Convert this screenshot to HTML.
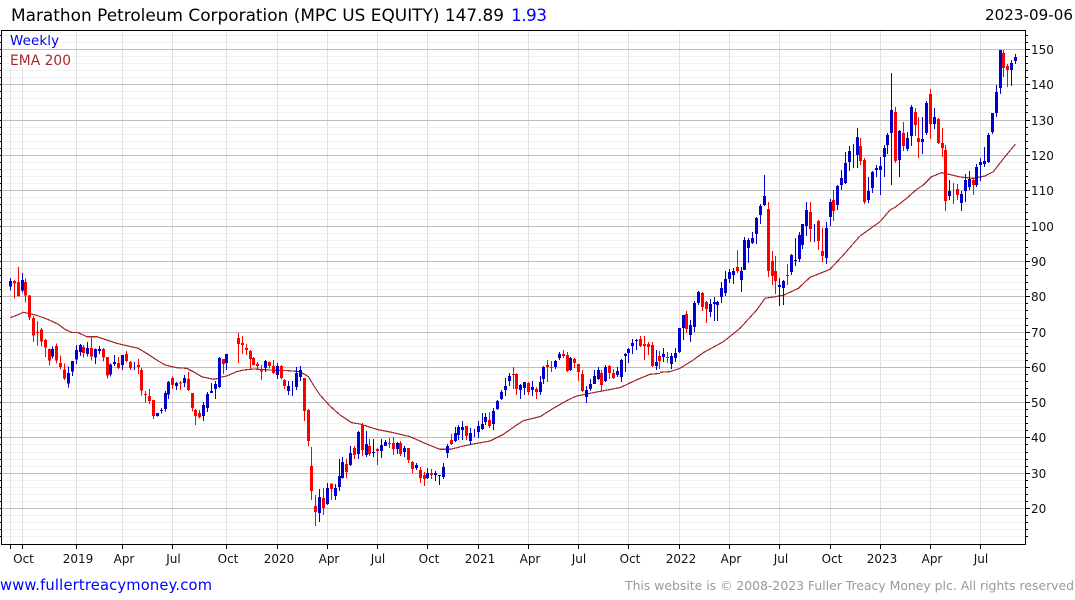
<!DOCTYPE html>
<html><head><meta charset="utf-8"><title>MPC</title>
<style>
html,body{margin:0;padding:0;background:#fff;width:1075px;height:600px;overflow:hidden}
svg{display:block}
text{font-family:"DejaVu Sans","Liberation Sans",sans-serif}
.l{font-size:12px;fill:#111}
.x{font-size:12px;fill:#111;text-anchor:middle}
.bw,.bb,.rw,.rb{fill:none;shape-rendering:crispEdges}
.bw{stroke:#0000cc;stroke-width:3.6}
.bb{stroke:#0000cc;stroke-width:9.6}
.rw{stroke:#ff0000;stroke-width:3.6}
.rb{stroke:#ff0000;stroke-width:9.6}
.e{fill:none;stroke:#a02a2a;stroke-width:3.6;stroke-linejoin:round;shape-rendering:crispEdges}
</style></head><body>
<svg width="1075" height="600" viewBox="0 0 1075 600" xmlns="http://www.w3.org/2000/svg">
<rect width="1075" height="600" fill="#fff"/>
<!-- minor horizontals -->
<path stroke="#f0f0f0" fill="none" shape-rendering="crispEdges" d="M2 35.5H1025M2 42.5H1025M2 56.5H1025M2 63.5H1025M2 70.5H1025M2 77.5H1025M2 91.5H1025M2 98.5H1025M2 105.5H1025M2 112.5H1025M2 127.5H1025M2 134.5H1025M2 141.5H1025M2 148.5H1025M2 162.5H1025M2 169.5H1025M2 176.5H1025M2 183.5H1025M2 197.5H1025M2 204.5H1025M2 212.5H1025M2 219.5H1025M2 233.5H1025M2 240.5H1025M2 247.5H1025M2 254.5H1025M2 268.5H1025M2 275.5H1025M2 282.5H1025M2 289.5H1025M2 303.5H1025M2 310.5H1025M2 318.5H1025M2 325.5H1025M2 339.5H1025M2 346.5H1025M2 353.5H1025M2 360.5H1025M2 374.5H1025M2 381.5H1025M2 388.5H1025M2 395.5H1025M2 409.5H1025M2 416.5H1025M2 423.5H1025M2 430.5H1025M2 444.5H1025M2 452.5H1025M2 459.5H1025M2 466.5H1025M2 480.5H1025M2 487.5H1025M2 494.5H1025M2 501.5H1025M2 515.5H1025M2 522.5H1025M2 529.5H1025M2 536.5H1025"/>
<!-- verticals -->
<path stroke="#e0e0e0" fill="none" shape-rendering="crispEdges" d="M10.5 31V544M22.5 31V544M76.5 31V544M122.5 31V544M172.5 31V544M226.5 31V544M277.5 31V544M327.5 31V544M377.5 31V544M427.5 31V544M478.5 31V544M528.5 31V544M578.5 31V544M628.5 31V544M679.5 31V544M729.5 31V544M779.5 31V544M830.5 31V544M880.5 31V544M930.5 31V544M980.5 31V544"/>
<!-- major horizontals -->
<path stroke="#bdbdbd" fill="none" shape-rendering="crispEdges" d="M2 49.5H1025M2 84.5H1025M2 120.5H1025M2 155.5H1025M2 190.5H1025M2 226.5H1025M2 261.5H1025M2 296.5H1025M2 332.5H1025M2 367.5H1025M2 402.5H1025M2 437.5H1025M2 473.5H1025M2 508.5H1025"/>
<!-- legend backing -->
<rect x="9" y="31" width="52" height="18" fill="#fff"/>
<rect x="9" y="50" width="63" height="18" fill="#fff"/>
<text x="10" y="45" font-size="13.4" fill="#0000e0" textLength="49">Weekly</text>
<text x="10" y="65" font-size="13.8" fill="#a52a2a" textLength="61">EMA 200</text>

<!-- EMA -->
<g transform="translate(0,250) scale(.33333)"><polyline class="e" points="31,203 50,196 70,187 85,190 110,196 130,203 150,211 175,223 195,238 215,247 235,248 260,260 290,260 320,270 350,280 380,287 415,295 440,310 470,330 495,345 530,353 560,355 580,365 605,380 640,388 660,384"/></g>
<g transform="translate(220,320) scale(.33333)"><polyline class="e" points="0,172 20,168 50,155 70,150 100,147 150,150 205,152 240,155 265,170 280,195 300,225 330,258 360,285 395,308 420,312 470,328 520,338 570,350 620,372 660,388 690,388 720,381"/></g>
<g transform="translate(440,320) scale(.33333)"><polyline class="e" points="60,380 100,372 150,363 190,343 230,315 250,302 300,290 340,265 380,242 410,228 470,216 540,203 600,175 630,163 660,160"/></g>
<g transform="translate(660,160) scale(.33333)"><polyline class="e" points="0,637 30,635 60,625 100,600 130,578 190,545 240,505 290,450 315,415 370,406 415,385 450,352 510,328 550,285 600,228"/></g>
<g transform="translate(840,30) scale(.33333)"><polyline class="e" points="60,618 88,598 120,575 150,540 165,532 200,505 230,478 250,465 275,440 305,428 340,436 360,441 400,445 435,438 460,425 495,380 526,343"/></g>

<!-- Candles section 1 -->
<g transform="translate(0,250) scale(.33333)">
<path class="bw" d="M31.5 84V122M67.5 69V127M157.5 290V326M205.5 350V413M217.5 333V378M229.5 285V342M241.5 282V318M262.5 276V320M286.5 295V342M298.5 288V312M331.5 340V379M343.5 315V348M367.5 315V360M403.5 336V360M472.5 489V500M484.5 474V490M496.5 423V484M505.5 393V447M529.5 396V420M553.5 375V411M610.5 456V513M622.5 426V486M634.5 399V429M646.5 393V447M658.5 321V414"/>
<path class="bb" d="M31.5 93V110M67.5 90V122M157.5 297V320M205.5 369V401M217.5 333V365M229.5 300V329M241.5 285V306M262.5 294V312M286.5 297V323M298.5 297V303M331.5 344V373M343.5 336V342M367.5 315V345M472.5 489V498M484.5 480V483M496.5 429V477M505.5 396V434M529.5 399V408M553.5 384V399M610.5 465V498M622.5 432V474M634.5 423V429M646.5 402V417M658.5 324V411"/>
<path class="rw" d="M43.5 90V146M55.5 51V140M76.5 85V158M88.5 135V210M100.5 198V276M112.5 213V287M124.5 234V290M136.5 267V321M148.5 295V347M169.5 280V340M181.5 316V358M193.5 340V390M250.5 285V323M274.5 260V332M310.5 294V335M322.5 321V386M355.5 321V357M379.5 303V338M391.5 333V360M415.5 327V372M424.5 354V437M436.5 423V459M448.5 417V462M460.5 450V507M517.5 380V417M541.5 393V420M565.5 366V423M577.5 429V485M586.5 477V525M598.5 480V505"/>
<path class="rb" d="M43.5 93V100M55.5 96V138M76.5 96V137M88.5 137V203M100.5 204V257M112.5 246V249M124.5 239V275M136.5 270V293M148.5 297V332M169.5 288V332M181.5 339V351M193.5 358V386M250.5 291V309M274.5 294V320M310.5 297V323M322.5 321V377M355.5 339V354M379.5 312V333M391.5 336V354M415.5 345V351M424.5 360V422M436.5 432V435M448.5 438V453M460.5 450V498M517.5 384V405M541.5 398V401M565.5 387V420M577.5 429V474M586.5 480V498M598.5 489V501"/>
</g>
<!-- Candles section 2 -->
<g transform="translate(220,320) scale(.33333)">
<path class="rw" d="M10.5 117V162M55.5 39V129M67.5 48V102M79.5 72V105M91.5 90V148M100.5 111V136M112.5 126V145M124.5 135V180M148.5 124V145M160.5 120V162M184.5 135V178M193.5 177V207M253.5 174V303M265.5 267V378M274.5 381V540M286.5 525V618M310.5 504V585M334.5 491V540M379.5 417V474M403.5 378V417M427.5 309V408M448.5 357V408M472.5 384V435M508.5 354V384M520.5 351V405M541.5 363V408M565.5 384V429M577.5 423V459M601.5 441V489M613.5 456V498M634.5 447V477M694.5 342V375"/>
<path class="rb" d="M10.5 117V132M55.5 54V72M67.5 69V75M79.5 84V90M91.5 93V117M100.5 114V135M112.5 132V138M124.5 147V155M148.5 126V138M160.5 138V159M184.5 138V174M193.5 180V198M253.5 174V273M265.5 270V363M274.5 438V513M286.5 558V576M310.5 534V564M334.5 491V507M379.5 432V456M403.5 384V405M427.5 315V390M448.5 378V402M472.5 387V393M508.5 369V372M520.5 369V387M541.5 369V402M565.5 384V420M577.5 426V447M601.5 450V474M613.5 465V477M634.5 459V465M694.5 360V372"/>
<path class="bw" d="M19.5 102V150M136.5 120V156M172.5 129V177M205.5 183V225M217.5 183V228M229.5 141V210M241.5 138V183M298.5 507V606M322.5 489V555M346.5 492V540M358.5 417V513M367.5 411V476M391.5 378V438M415.5 333V417M439.5 333V411M460.5 357V411M484.5 357V414M496.5 360V378M532.5 366V402M553.5 378V411M589.5 429V450M622.5 444V477M646.5 453V483M658.5 465V495M670.5 429V477M682.5 372V414M706.5 321V366M715.5 315V360"/>
<path class="bb" d="M19.5 102V129M136.5 123V144M172.5 138V165M205.5 198V213M229.5 159V201M241.5 150V171M298.5 531V579M322.5 504V552M346.5 504V528M358.5 468V501M367.5 426V474M391.5 399V435M415.5 336V402M439.5 372V405M460.5 396V399M484.5 375V393M496.5 366V378M532.5 369V387M553.5 384V396M589.5 435V444M622.5 459V474M646.5 459V465M658.5 465V468M670.5 441V471M682.5 378V399M706.5 339V363M715.5 321V345"/>
</g>
<!-- Candles section 3 -->
<g transform="translate(440,320) scale(.33333)">
<path class="bw" d="M67.5 303V360M91.5 324V375M103.5 327V351M115.5 303V354M127.5 279V330M136.5 279V315M160.5 264V330M172.5 240V270M184.5 210V240M196.5 174V228M208.5 159V198M241.5 192V237M253.5 186V225M277.5 183V228M301.5 168V225M310.5 138V192M346.5 120V147M358.5 96V120M391.5 111V153M439.5 198V249M451.5 177V213M463.5 150V192M475.5 141V180M496.5 135V186M532.5 141V171M544.5 117V186M556.5 99V156M565.5 84V129M577.5 57V102M589.5 57V90M649.5 90V150M670.5 84V126M694.5 99V147M706.5 84V126M718.5 24V99"/>
<path class="bb" d="M67.5 321V330M91.5 339V363M115.5 318V336M127.5 312V327M136.5 291V306M160.5 273V312M172.5 243V267M184.5 216V237M196.5 198V210M208.5 168V183M241.5 195V210M253.5 186V204M277.5 201V210M301.5 186V216M310.5 141V177M346.5 123V141M358.5 102V114M391.5 114V150M439.5 210V231M451.5 192V207M463.5 168V192M475.5 150V177M496.5 141V183M532.5 153V165M544.5 120V171M556.5 102V108M565.5 87V99M577.5 69V78M589.5 60V63M649.5 126V138M670.5 102V111M694.5 108V132M706.5 99V114M718.5 24V96"/>
<path class="rw" d="M79.5 318V360M148.5 276V324M220.5 141V207M229.5 159V225M265.5 186V225M289.5 201V237M322.5 120V186M334.5 123V156M370.5 90V114M382.5 96V156M403.5 114V144M415.5 132V183M427.5 150V216M484.5 150V213M508.5 135V177M520.5 147V177M601.5 48V81M613.5 48V120M625.5 66V105M637.5 66V141M658.5 93V147M682.5 96V129"/>
<path class="rb" d="M79.5 318V348M148.5 300V318M220.5 162V165M229.5 162V207M265.5 189V216M289.5 207V216M322.5 135V141M334.5 141V144M370.5 102V108M382.5 105V153M403.5 117V129M415.5 132V156M427.5 162V213M484.5 159V195M508.5 138V159M520.5 159V174M601.5 57V78M613.5 72V78M625.5 72V81M637.5 75V138M658.5 108V123M682.5 111V114"/>
</g>
<!-- Candles section 4 -->
<g transform="translate(660,160) scale(.33333)">
<path class="bw" d="M70.5 465V540M91.5 480V546M103.5 423V516M115.5 393V435M151.5 417V471M163.5 411V483M172.5 423V483M184.5 366V429M196.5 333V408M208.5 327V369M220.5 324V372M244.5 321V396M253.5 231V330M265.5 234V309M277.5 216V252M289.5 171V252M301.5 132V192M313.5 45V138M358.5 354V438M370.5 360V435M394.5 282V345M406.5 234V318M418.5 216V306M427.5 192V267M439.5 126V228M463.5 192V246M499.5 186V312M511.5 117V198M532.5 75V150M544.5 30V90"/>
<path class="bb" d="M70.5 465V504M91.5 495V525M103.5 429V501M115.5 396V429M151.5 432V456M163.5 426V432M172.5 426V435M184.5 384V411M196.5 357V399M208.5 336V357M220.5 333V345M244.5 333V360M253.5 240V330M265.5 240V264M277.5 234V249M289.5 174V222M301.5 138V165M313.5 108V135M358.5 375V381M370.5 363V384M394.5 285V336M406.5 300V303M418.5 225V297M427.5 192V255M439.5 150V198M499.5 204V294M511.5 126V171M532.5 78V135M544.5 54V75"/>
<path class="rw" d="M79.5 453V519M127.5 396V453M139.5 423V489M232.5 270V339M325.5 126V351M337.5 273V375M346.5 288V402M382.5 312V375M451.5 126V246M475.5 180V270M487.5 204V306M520.5 90V183"/>
<path class="rb" d="M79.5 462V507M127.5 399V441M139.5 426V447M232.5 321V333M325.5 147V333M337.5 303V348M346.5 333V363M382.5 345V348M451.5 156V207M475.5 183V243M487.5 273V288M520.5 120V153"/>
</g>
<!-- Candles section 5 -->
<g transform="translate(840,30) scale(.33333)">
<path class="bw" d="M16.5 366V462M28.5 348V423M40.5 342V414M52.5 294V414M85.5 441V519M97.5 423V489M109.5 405V441M121.5 381V495M133.5 345V441M142.5 309V372M154.5 129V465M178.5 300V441M202.5 306V363M214.5 225V348M247.5 261V372M259.5 213V315M283.5 234V297M328.5 450V510M364.5 483V543M376.5 432V516M388.5 423V480M409.5 402V471M421.5 384V453M433.5 351V411M445.5 309V399M457.5 249V312M469.5 165V261M481.5 60V192M514.5 90V168M526.5 72V102"/>
<path class="bb" d="M16.5 399V459M28.5 363V396M52.5 321V375M85.5 483V510M97.5 426V474M109.5 414V420M121.5 408V420M133.5 354V381M142.5 315V345M154.5 240V309M178.5 303V390M202.5 324V357M214.5 231V318M247.5 327V336M259.5 219V309M283.5 261V282M328.5 483V498M364.5 492V519M376.5 450V483M388.5 447V471M409.5 411V465M421.5 396V405M433.5 393V402M445.5 315V396M457.5 249V306M469.5 186V249M481.5 60V174M514.5 99V120M526.5 81V93"/>
<path class="rw" d="M61.5 324V405M73.5 384V522M166.5 231V399M190.5 276V363M226.5 234V318M235.5 261V384M271.5 177V327M295.5 264V342M307.5 294V381M316.5 345V543M340.5 459V522M352.5 462V510M400.5 447V495M490.5 60V141M502.5 102V171"/>
<path class="rb" d="M61.5 348V393M73.5 390V516M166.5 246V393M190.5 309V348M226.5 246V285M235.5 324V336M271.5 192V282M295.5 267V339M307.5 339V354M316.5 360V513M352.5 477V495M400.5 450V465M490.5 69V114M502.5 108V120"/>
</g>

<!-- Frame -->
<rect x="1.5" y="30.5" width="1024" height="514" fill="none" stroke="#000" shape-rendering="crispEdges"/>
<!-- Ticks -->
<path stroke="#000" fill="none" shape-rendering="crispEdges" d="M0 35.5H1M0 42.5H1M0 49.5H1M0 56.5H1M0 63.5H1M0 70.5H1M0 77.5H1M0 84.5H1M0 91.5H1M0 98.5H1M0 105.5H1M0 112.5H1M0 120.5H1M0 127.5H1M0 134.5H1M0 141.5H1M0 148.5H1M0 155.5H1M0 162.5H1M0 169.5H1M0 176.5H1M0 183.5H1M0 190.5H1M0 197.5H1M0 204.5H1M0 212.5H1M0 219.5H1M0 226.5H1M0 233.5H1M0 240.5H1M0 247.5H1M0 254.5H1M0 261.5H1M0 268.5H1M0 275.5H1M0 282.5H1M0 289.5H1M0 296.5H1M0 303.5H1M0 310.5H1M0 318.5H1M0 325.5H1M0 332.5H1M0 339.5H1M0 346.5H1M0 353.5H1M0 360.5H1M0 367.5H1M0 374.5H1M0 381.5H1M0 388.5H1M0 395.5H1M0 402.5H1M0 409.5H1M0 416.5H1M0 423.5H1M0 430.5H1M0 437.5H1M0 444.5H1M0 452.5H1M0 459.5H1M0 466.5H1M0 473.5H1M0 480.5H1M0 487.5H1M0 494.5H1M0 501.5H1M0 508.5H1M0 515.5H1M0 522.5H1M0 529.5H1M0 536.5H1"/>
<path stroke="#000" fill="none" shape-rendering="crispEdges" d="M1026 35.5H1028M1026 42.5H1028M1026 49.5H1030M1026 56.5H1028M1026 63.5H1028M1026 70.5H1028M1026 77.5H1028M1026 84.5H1030M1026 91.5H1028M1026 98.5H1028M1026 105.5H1028M1026 112.5H1028M1026 120.5H1030M1026 127.5H1028M1026 134.5H1028M1026 141.5H1028M1026 148.5H1028M1026 155.5H1030M1026 162.5H1028M1026 169.5H1028M1026 176.5H1028M1026 183.5H1028M1026 190.5H1030M1026 197.5H1028M1026 204.5H1028M1026 212.5H1028M1026 219.5H1028M1026 226.5H1030M1026 233.5H1028M1026 240.5H1028M1026 247.5H1028M1026 254.5H1028M1026 261.5H1030M1026 268.5H1028M1026 275.5H1028M1026 282.5H1028M1026 289.5H1028M1026 296.5H1030M1026 303.5H1028M1026 310.5H1028M1026 318.5H1028M1026 325.5H1028M1026 332.5H1030M1026 339.5H1028M1026 346.5H1028M1026 353.5H1028M1026 360.5H1028M1026 367.5H1030M1026 374.5H1028M1026 381.5H1028M1026 388.5H1028M1026 395.5H1028M1026 402.5H1030M1026 409.5H1028M1026 416.5H1028M1026 423.5H1028M1026 430.5H1028M1026 437.5H1030M1026 444.5H1028M1026 452.5H1028M1026 459.5H1028M1026 466.5H1028M1026 473.5H1030M1026 480.5H1028M1026 487.5H1028M1026 494.5H1028M1026 501.5H1028M1026 508.5H1030M1026 515.5H1028M1026 522.5H1028M1026 529.5H1028M1026 536.5H1028"/>
<path stroke="#000" fill="none" shape-rendering="crispEdges" d="M10.5 545V549M22.5 545V549M76.5 545V549M122.5 545V549M172.5 545V549M226.5 545V549M277.5 545V549M327.5 545V549M377.5 545V549M427.5 545V549M478.5 545V549M528.5 545V549M578.5 545V549M628.5 545V549M679.5 545V549M729.5 545V549M779.5 545V549M830.5 545V549M880.5 545V549M930.5 545V549M980.5 545V549"/>

<!-- Title -->
<text x="11" y="21" font-size="16.9" fill="#000" textLength="493">Marathon Petroleum Corporation (MPC US EQUITY) 147.89</text>
<text x="511" y="21" font-size="16.9" fill="#0000ff" textLength="36">1.93</text>
<text x="985" y="20" font-size="15.1" fill="#000" textLength="88">2023-09-06</text>

<!-- Y labels -->
<text class="l" x="1031" y="54">150</text><text class="l" x="1031" y="89">140</text><text class="l" x="1031" y="125">130</text><text class="l" x="1031" y="160">120</text><text class="l" x="1031" y="195">110</text><text class="l" x="1031" y="231">100</text>
<text class="l" x="1031" y="266">90</text><text class="l" x="1031" y="301">80</text><text class="l" x="1031" y="337">70</text><text class="l" x="1031" y="372">60</text><text class="l" x="1031" y="407">50</text><text class="l" x="1031" y="442">40</text><text class="l" x="1031" y="478">30</text><text class="l" x="1031" y="513">20</text>

<!-- X labels -->
<text class="x" x="23.5" y="563">Oct</text><text class="x" x="78" y="563">2019</text><text class="x" x="124" y="563">Apr</text><text class="x" x="173.5" y="563">Jul</text><text class="x" x="228" y="563">Oct</text><text class="x" x="279" y="563">2020</text><text class="x" x="329" y="563">Apr</text><text class="x" x="378" y="563">Jul</text><text class="x" x="429" y="563">Oct</text><text class="x" x="480" y="563">2021</text><text class="x" x="530" y="563">Apr</text><text class="x" x="579" y="563">Jul</text><text class="x" x="630" y="563">Oct</text><text class="x" x="681" y="563">2022</text><text class="x" x="731" y="563">Apr</text><text class="x" x="781" y="563">Jul</text><text class="x" x="832" y="563">Oct</text><text class="x" x="882" y="563">2023</text><text class="x" x="932" y="563">Apr</text><text class="x" x="981" y="563">Jul</text>

<!-- Footer -->
<text x="0" y="590" font-size="14.7" fill="#0000ff" textLength="212">www.fullertreacymoney.com</text>
<text x="625" y="590" font-size="12.4" fill="#999999" textLength="449">This website is © 2008-2023 Fuller Treacy Money plc. All rights reserved</text>
</svg>
</body></html>
